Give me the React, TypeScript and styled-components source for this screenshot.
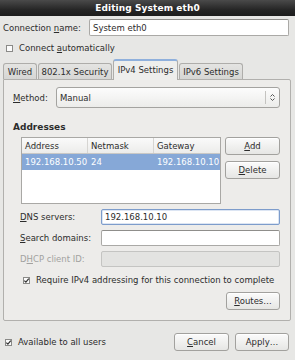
import React, { FC } from 'react';
import styled, { createGlobalStyle, css } from 'styled-components';

const GlobalStyle = createGlobalStyle`
  html, body {
    margin: 0;
    padding: 0;
    background: #e7e7e5;
  }
  body {
    font-family: "DejaVu Sans", "Liberation Sans", sans-serif;
    font-size: 8.5px;
    color: #2c2c2c;
  }
`;

const Window = styled.div`
  width: 295px;
  height: 360px;
  display: flex;
  flex-direction: column;
  background: #e7e7e5;
  overflow: hidden;
`;

const TitleBar = styled.div`
  height: 16px;
  flex: none;
  display: flex;
  align-items: center;
  justify-content: center;
  background: linear-gradient(#4a4a4a, #262626 60%, #1c1c1c);
  color: #fff;
  font-weight: bold;
  font-size: 9px;
  letter-spacing: 0.1px;
`;

const Content = styled.div`
  display: flex;
  flex-direction: column;
  padding: 0 4px 0 3px;
`;

const Row = styled.div<{ $top?: number; $height?: number; $indent?: number }>`
  display: flex;
  align-items: center;
  margin-top: ${p => p.$top ?? 0}px;
  height: ${p => p.$height ?? 16}px;
  padding-left: ${p => p.$indent ?? 0}px;
`;

const Label = styled.span<{ $width: number; $disabled?: boolean }>`
  width: ${p => p.$width}px;
  flex: none;
  white-space: nowrap;
  color: ${p => (p.$disabled ? '#a2a2a0' : 'inherit')};
`;

const U = styled.span`
  text-decoration: underline;
  text-underline-offset: 1px;
`;

const TextInput = styled.div<{ $focused?: boolean; $disabled?: boolean; $height?: number }>`
  flex: 1;
  height: ${p => p.$height ?? 16}px;
  box-sizing: border-box;
  display: flex;
  align-items: center;
  padding-left: 3px;
  background: #fff;
  border: 1px solid #aaa9a6;
  border-top-color: #8f8e8b;
  border-radius: 2px;
  ${p =>
    p.$focused &&
    css`
      border-color: #7d9ccb;
      box-shadow: inset 0 0 0 0.5px #b9cce8;
    `}
  ${p =>
    p.$disabled &&
    css`
      background: #e3e3e1;
      border-color: #c4c4c2;
    `}
`;

const Box = styled.span`
  width: 7px;
  height: 7px;
  flex: none;
  box-sizing: border-box;
  border: 1px solid #8a8a88;
  background: #fbfbfb;
  margin-right: 6px;
  display: inline-flex;
  align-items: center;
  justify-content: center;
`;

const CheckBox: FC<{ checked?: boolean }> = ({ checked }) => (
  <Box>
    {checked && (
      <svg width="7" height="7" viewBox="0 0 7 7" style={{ margin: -1 }}>
        <path d="M1.3 3.6 L2.9 5.2 L5.8 1.6" fill="none" stroke="#333" strokeWidth="1.2" />
      </svg>
    )}
  </Box>
);

const TabRow = styled.div`
  display: flex;
  align-items: flex-end;
  height: 20px;
  margin-top: 3px;
  position: relative;
  z-index: 1;
`;

const Tab = styled.div<{ $width: number; $active?: boolean }>`
  width: ${p => p.$width}px;
  box-sizing: border-box;
  height: ${p => (p.$active ? 21 : 16)}px;
  margin-bottom: ${p => (p.$active ? -1 : 0)}px;
  margin-right: 1px;
  display: flex;
  align-items: center;
  justify-content: center;
  border: 1px solid #aeadaa;
  border-bottom: none;
  border-radius: 3px 3px 0 0;
  background: linear-gradient(#e4e4e2, #d6d6d4);
  ${p =>
    p.$active &&
    css`
      background: #eeeeec;
      border-top: 2px solid #8fb0dc;
      padding-bottom: 2px;
    `}
`;

const Panel = styled.div`
  height: 242px;
  box-sizing: border-box;
  border: 1px solid #b1b0ad;
  border-radius: 0 2px 2px 2px;
  background: #edecea;
  display: flex;
  flex-direction: column;
  padding: 7px 10px 0 9px;
`;

const Select = styled.div`
  flex: 1;
  height: 21px;
  box-sizing: border-box;
  display: flex;
  align-items: center;
  border: 1px solid #a4a3a0;
  border-radius: 3px;
  background: linear-gradient(#fcfcfc, #ececea);
  padding-left: 3px;
`;

const SelectText = styled.span`
  flex: 1;
`;

const SelectArrow = styled.span`
  width: 13px;
  height: 13px;
  border-left: 1px solid #c4c3c0;
  display: flex;
  align-items: center;
  justify-content: center;
`;

const Heading = styled.div`
  margin-top: 12px;
  height: 14px;
  display: flex;
  align-items: center;
  font-weight: bold;
  font-size: 9px;
`;

const AddressArea = styled.div`
  display: flex;
  margin-top: 3px;
  padding-left: 8px;
`;

const Table = styled.div`
  width: 200px;
  height: 67px;
  box-sizing: border-box;
  border: 1px solid #a9a8a5;
  background: #fff;
`;

const TableRow = styled.div<{ $header?: boolean; $selected?: boolean }>`
  display: grid;
  grid-template-columns: 66px 66px 1fr;
  height: ${p => (p.$header ? 15 : 16)}px;
  ${p =>
    p.$header &&
    css`
      background: linear-gradient(#fafafa, #ececea);
      border-bottom: 1px solid #c9c8c5;
    `}
  ${p =>
    p.$selected &&
    css`
      background: #86a8d7;
      color: #fff;
    `}
`;

const Cell = styled.div<{ $header?: boolean }>`
  display: flex;
  align-items: center;
  padding-left: ${p => (p.$header ? 3 : 3)}px;
  white-space: nowrap;
  overflow: hidden;
  border-right: ${p => (p.$header ? '1px solid #d6d5d2' : 'none')};
  &:last-child {
    border-right: none;
  }
`;

const ButtonColumn = styled.div`
  margin-left: 4px;
  display: flex;
  flex-direction: column;
  gap: 6px;
`;

const Button = styled.div<{ $width?: number }>`
  width: ${p => p.$width ?? 55}px;
  height: 18px;
  box-sizing: border-box;
  display: flex;
  align-items: center;
  justify-content: center;
  border: 1px solid #a2a19e;
  border-radius: 3px;
  background: linear-gradient(#fbfbfb, #e6e6e4);
  box-shadow: inset 0 1px 0 #fff;
`;

const FormRows = styled.div`
  display: flex;
  flex-direction: column;
  gap: 5px;
  margin-top: 5px;
  padding-left: 7px;
`;

const RightAligned = styled.div<{ $top: number }>`
  display: flex;
  justify-content: flex-end;
  margin-top: ${p => p.$top}px;
`;

const BottomBar = styled.div`
  display: flex;
  align-items: center;
  margin-top: 12px;
  height: 18px;
  padding-left: 2px;
  padding-right: 2px;
`;

const Spacer = styled.div`
  flex: 1;
`;

const ButtonGroup = styled.div`
  display: flex;
  gap: 6px;
`;

const App: FC = () => {
  return (
    <Window>
      <GlobalStyle />
      <TitleBar>Editing System eth0</TitleBar>
      <Content>
        <Row $top={3} $height={17} style={{ paddingRight: 2 }}>
          <Label $width={86}>
            Connection <U>n</U>ame:
          </Label>
          <TextInput $height={17}>System eth0</TextInput>
        </Row>
        <Row $top={4} $indent={3}>
          <CheckBox />
          <span>
            Connect <U>a</U>utomatically
          </span>
        </Row>
        <TabRow>
          <Tab $width={34}>Wired</Tab>
          <Tab $width={74}>802.1x Security</Tab>
          <Tab $width={65} $active>
            IPv4 Settings
          </Tab>
          <Tab $width={64}>IPv6 Settings</Tab>
        </TabRow>
        <Panel>
          <Row $height={21}>
            <Label $width={43}>
              <U>M</U>ethod:
            </Label>
            <Select>
              <SelectText>Manual</SelectText>
              <SelectArrow>
                <svg width="7" height="9" viewBox="0 0 7 9">
                  <path d="M1.5 3.5 L3.5 1.5 L5.5 3.5 M1.5 5.5 L3.5 7.5 L5.5 5.5" fill="none" stroke="#555" strokeWidth="1" />
                </svg>
              </SelectArrow>
            </Select>
          </Row>
          <Heading>Addresses</Heading>
          <AddressArea>
            <Table>
              <TableRow $header>
                <Cell $header>Address</Cell>
                <Cell $header>Netmask</Cell>
                <Cell $header>Gateway</Cell>
              </TableRow>
              <TableRow $selected>
                <Cell>192.168.10.50</Cell>
                <Cell>24</Cell>
                <Cell>192.168.10.10</Cell>
              </TableRow>
            </Table>
            <ButtonColumn>
              <Button>
                <span>
                  <U>A</U>dd
                </span>
              </Button>
              <Button>
                <span>
                  <U>D</U>elete
                </span>
              </Button>
            </ButtonColumn>
          </AddressArea>
          <FormRows>
            <Row>
              <Label $width={81}>
                <U>D</U>NS servers:
              </Label>
              <TextInput $focused>192.168.10.10</TextInput>
            </Row>
            <Row>
              <Label $width={81}>
                <U>S</U>earch domains:
              </Label>
              <TextInput />
            </Row>
            <Row>
              <Label $width={81} $disabled>
                D<U>H</U>CP client ID:
              </Label>
              <TextInput $disabled />
            </Row>
            <Row $indent={3}>
              <CheckBox checked />
              <span>Require IPv4 addressing for this connection to complete</span>
            </Row>
          </FormRows>
          <RightAligned $top={4}>
            <Button $width={54}>
              <span>
                <U>R</U>outes…
              </span>
            </Button>
          </RightAligned>
        </Panel>
        <BottomBar>
          <CheckBox checked />
          <span>Available to all users</span>
          <Spacer />
          <ButtonGroup>
            <Button>
              <span>
                <U>C</U>ancel
              </span>
            </Button>
            <Button $width={54}>Apply…</Button>
          </ButtonGroup>
        </BottomBar>
      </Content>
    </Window>
  );
};

export default App;
